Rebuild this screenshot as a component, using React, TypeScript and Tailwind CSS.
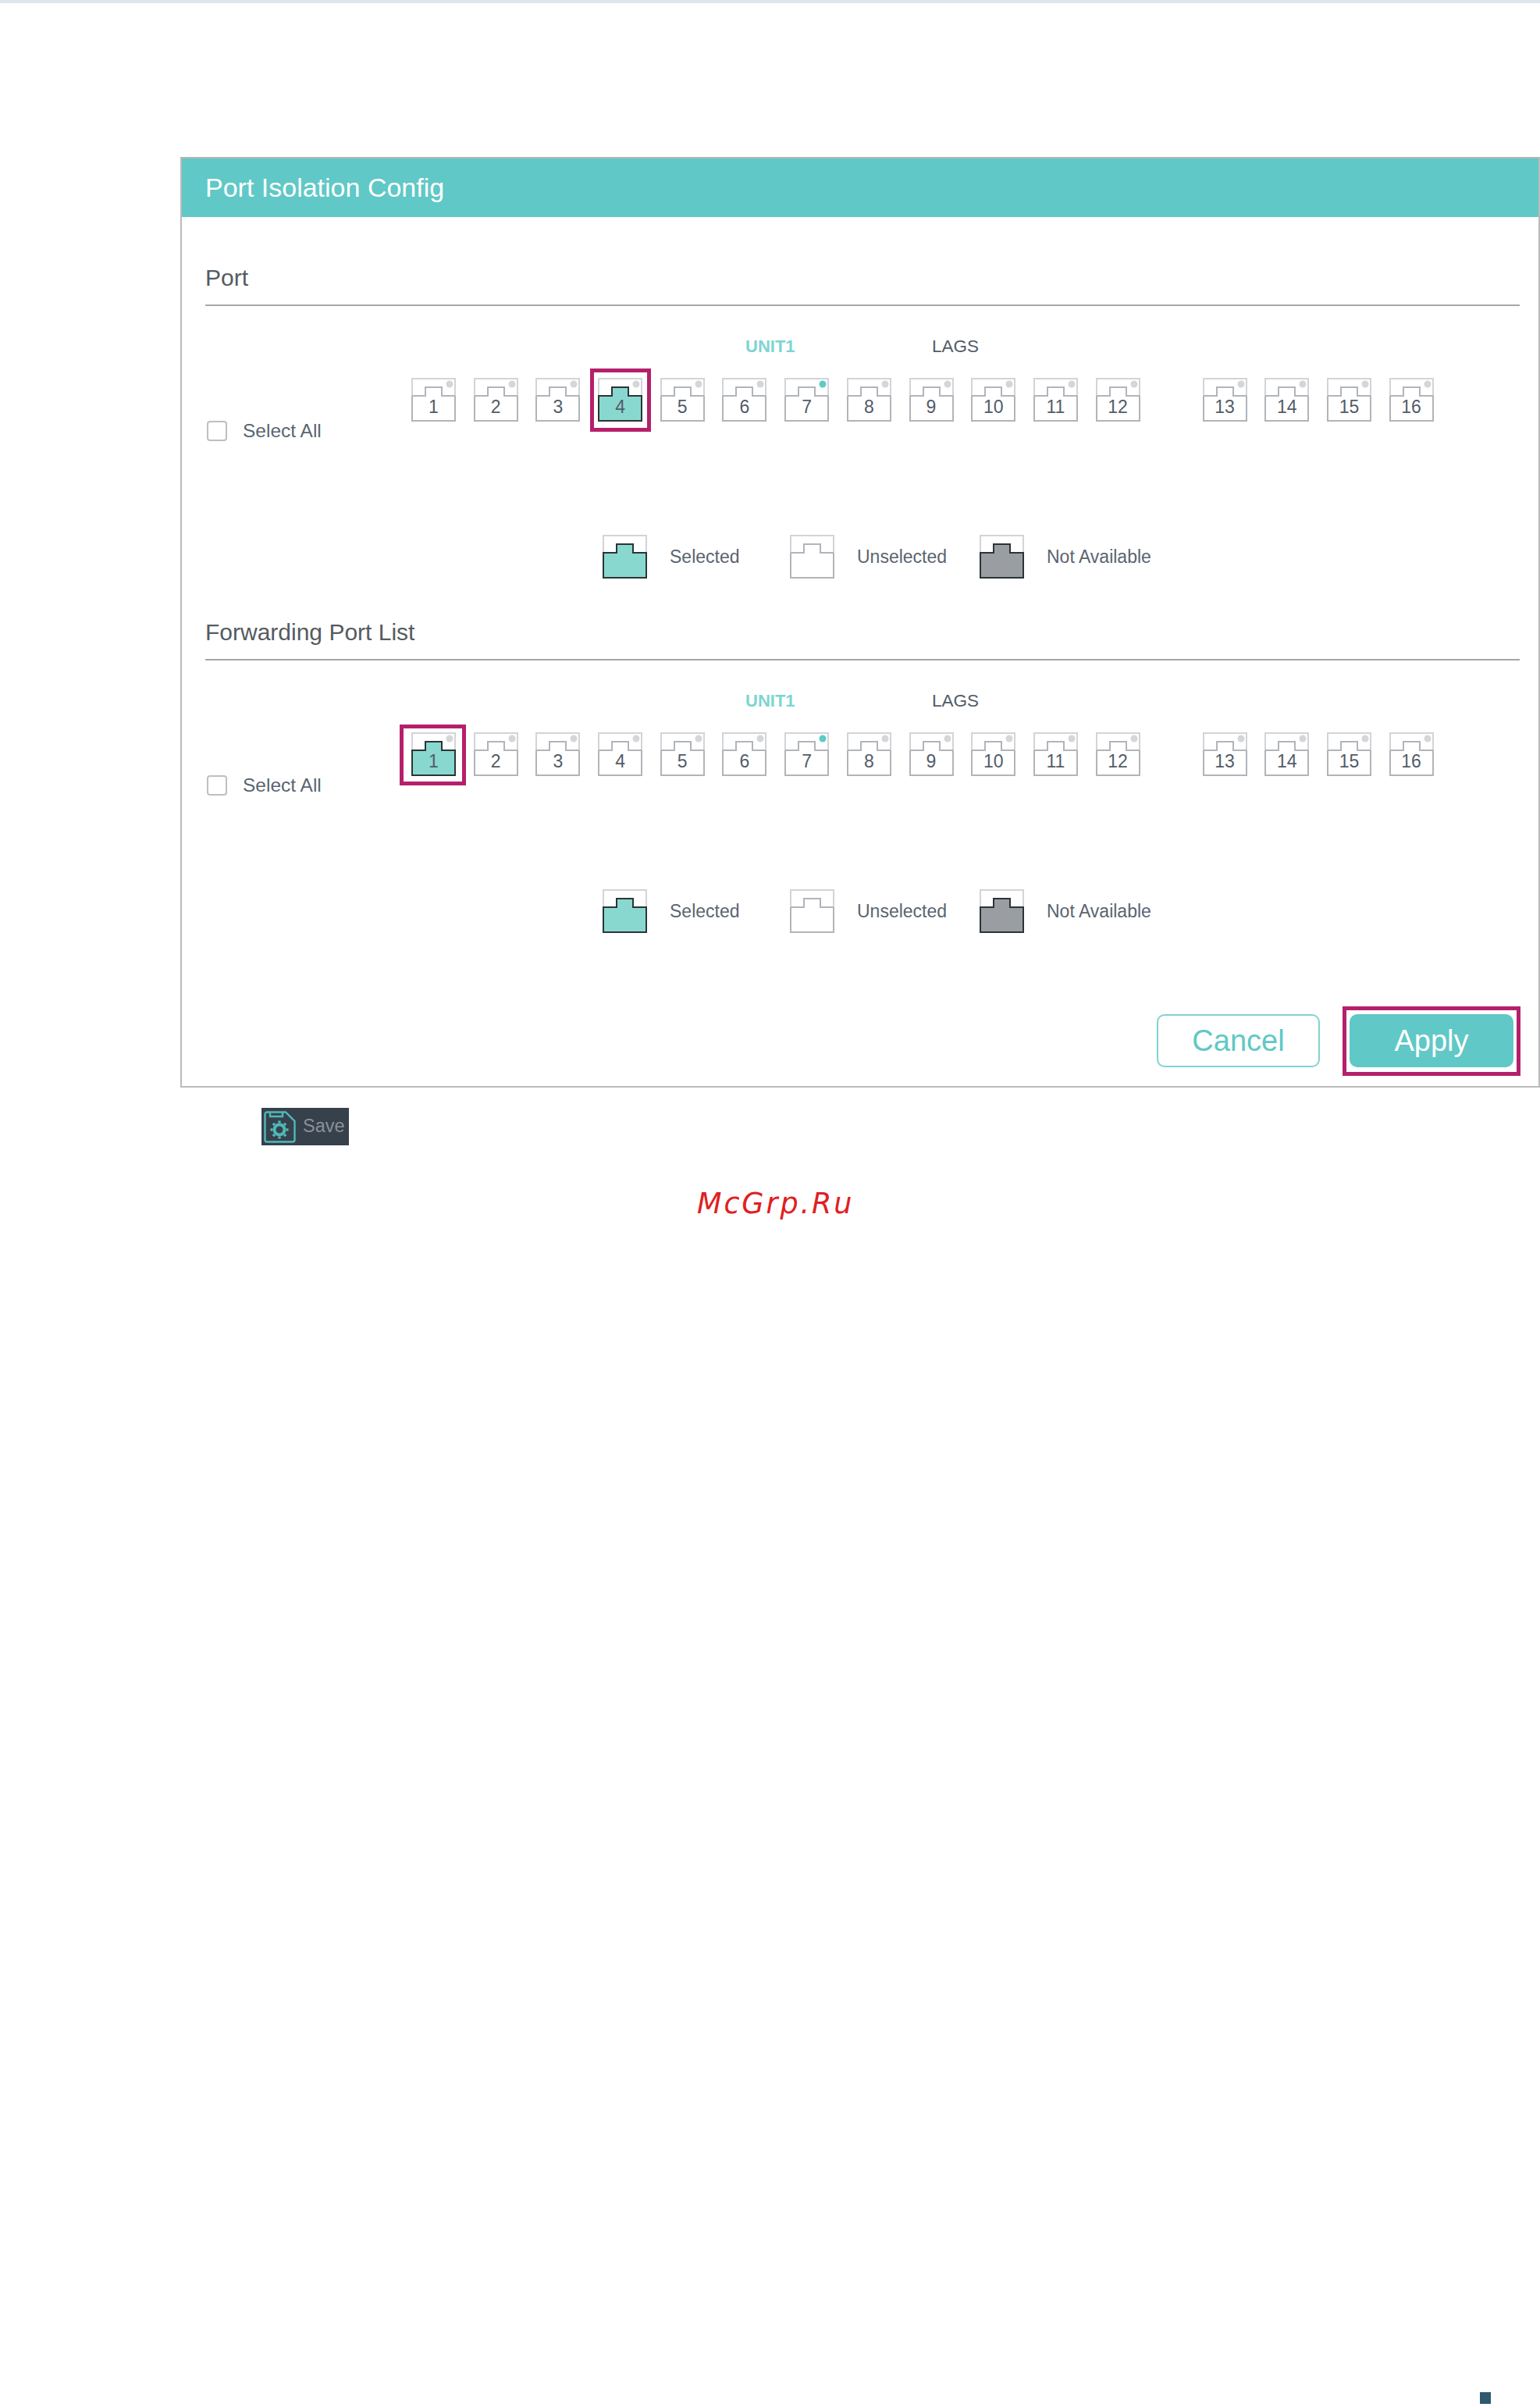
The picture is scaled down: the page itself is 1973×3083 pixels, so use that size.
import * as React from 'react';

const UNIT_PORTS = [1, 2, 3, 4, 5, 6, 7, 8, 9, 10, 11, 12];
const LAG_PORTS = [13, 14, 15, 16];
const NOTCH = 'M1 23H18V12H39V23H56';
const LOWER = 'M1 55V23H18V12H39V23H56V55Z';

type PortState = 'selected' | 'unselected' | 'disabled';

function PortIcon({ state, dot }: { state: PortState; dot?: string }) {
  const fill = state === 'selected' ? '#88d8d0' : state === 'disabled' ? '#9a9ea3' : 'none';
  return (
    <svg width="57" height="56" viewBox="0 0 57 56" className="block">
      <path d="M1 23V1H56V23" fill="none" stroke="#d2d4d8" strokeWidth="2" />
      {state === 'unselected' ? (
        <>
          <path d="M1 23V55H56V23" fill="none" stroke="#b1b5ba" strokeWidth="2" />
          <path d={NOTCH} fill="none" stroke="#b1b5ba" strokeWidth="2" />
        </>
      ) : (
        <path d={LOWER} fill={fill} stroke="#2b3436" strokeWidth="2" />
      )}
      {dot && <circle cx="49" cy="8" r="4.5" fill={dot} />}
    </svg>
  );
}

function Port({ num, selected, ring }: { num: number; selected?: boolean; ring?: string }) {
  return (
    <div className="relative w-[57px] h-[56px] shrink-0">
      <PortIcon state={selected ? 'selected' : 'unselected'} dot={num === 7 ? '#5ccbc6' : '#d6d6d6'} />
      <span className="absolute left-0 right-0 top-[23px] text-center text-[23px] leading-[28px] text-[#525c68]">
        {num}
      </span>
      {ring && <span className={`absolute border-[5px] border-[#b5206b] ${ring}`} />}
    </div>
  );
}

function LegendItem({ state, label, className }: { state: PortState; label: string; className?: string }) {
  return (
    <div className={`flex items-center gap-[29px] ${className ?? ''}`}>
      <PortIcon state={state} />
      <span className="text-[23px] text-[#5a6470]">{label}</span>
    </div>
  );
}

function PortSection({
  title,
  selectedPort,
  ring,
}: {
  title: string;
  selectedPort: number;
  ring: string;
}) {
  return (
    <section>
      <div className="h-[50px] border-b-2 border-[#a3a7ac] text-[30px] leading-[28px] text-[#555b61]">{title}</div>

      <div className="flex h-[92px] pl-[692px] pt-[39px] text-[22.5px] leading-[26px]">
        <span className="w-[239px] font-bold text-[22px] text-[#7dd5d1]">UNIT1</span>
        <span className="text-[#525c68]">LAGS</span>
      </div>

      <div className="flex h-[81px]">
        <div className="w-[264px] shrink-0 pt-[55px] flex items-start">
          <span className="ml-[2px] w-[26px] h-[26px] rounded-[4px] border-2 border-[#bcc0c5]" />
          <span className="ml-[20px] text-[24.5px] leading-[26px] text-[#5a6470]">Select All</span>
        </div>
        <div className="flex gap-[22.7px]">
          {UNIT_PORTS.map((n) => (
            <Port key={n} num={n} selected={n === selectedPort} ring={n === selectedPort ? ring : undefined} />
          ))}
        </div>
        <div className="flex gap-[22.7px] ml-[80px]">
          {LAG_PORTS.map((n) => (
            <Port key={n} num={n} />
          ))}
        </div>
      </div>

      <div className="flex mt-[120px] ml-[509px]">
        <LegendItem state="selected" label="Selected" className="w-[240px]" />
        <LegendItem state="unselected" label="Unselected" className="w-[243px]" />
        <LegendItem state="disabled" label="Not Available" />
      </div>
    </section>
  );
}

function SaveIcon() {
  const teeth = [0, 45, 90, 135, 180, 225, 270, 315];
  return (
    <svg width="41" height="41" viewBox="0 0 41 41" fill="none" stroke="#4fb9b8" strokeWidth="2.4">
      <path d="M4 1.5H28L39.5 13V37A2.5 2.5 0 0 1 37 39.5H4A2.5 2.5 0 0 1 1.5 37V4A2.5 2.5 0 0 1 4 1.5Z" />
      <path d="M8 2V7H24V2" />
      <circle cx="20" cy="24" r="6.5" strokeWidth="4" />
      {teeth.map((a) => (
        <path key={a} d="M20 12.5V15.5" strokeWidth="3.4" transform={`rotate(${a} 20 24)`} />
      ))}
    </svg>
  );
}

export default function App() {
  return (
    <div className="w-[1973px] h-[3083px] overflow-hidden bg-white font-['Liberation_Sans',Arial,sans-serif]">
      <div className="h-[4px] bg-[#dce6ec]" />

      <div className="ml-[231px] mt-[197px] h-[1192px] border-2 border-[#bbbbbb] border-t-[#b5b5b5]">
        <div className="h-[75px] bg-[#60c8c6] pl-[30px] text-[34px] leading-[75px] text-white">
          Port Isolation Config
        </div>

        <div className="pl-[30px] pr-[24px] pt-[64px]">
          <PortSection title="Port" selectedPort={4} ring="-left-[10px] -right-[11px] -top-[12px] -bottom-[13px]" />
          <div className="h-[55px]" />
          <PortSection
            title="Forwarding Port List"
            selectedPort={1}
            ring="-left-[15px] -right-[13px] -top-[10px] -bottom-[12px]"
          />

          <div className="flex justify-end items-center mt-[104px] pr-[8px] gap-[38px]">
            <button className="w-[209px] h-[68px] rounded-[10px] border-2 border-[#7fd4d0] text-[38px] text-[#60c8c6]">
              Cancel
            </button>
            <button className="relative w-[210px] h-[68px] rounded-[10px] bg-[#60c8c6] text-[38px] text-white">
              Apply
              <span className="absolute -left-[9px] -right-[9px] -top-[10px] -bottom-[11px] border-[5px] border-[#b5206b]" />
            </button>
          </div>
        </div>
      </div>

      <div className="ml-[335px] mt-[26px] w-[112px] h-[48px] bg-[#36414c] flex items-center pl-[3px] gap-[9px]">
        <SaveIcon />
        <span className="text-[23.5px] text-[#8a909a]">Save</span>
      </div>

      <div className="ml-[893px] mt-[54px] font-['DejaVu_Sans',sans-serif] italic text-[36.5px] leading-[42px] tracking-[2.9px] text-[#e02020]">
        McGrp.Ru
      </div>

      <div className="ml-[1896px] mt-[1501px] w-[14px] h-[15px] bg-[#2e5a70]" />
    </div>
  );
}
